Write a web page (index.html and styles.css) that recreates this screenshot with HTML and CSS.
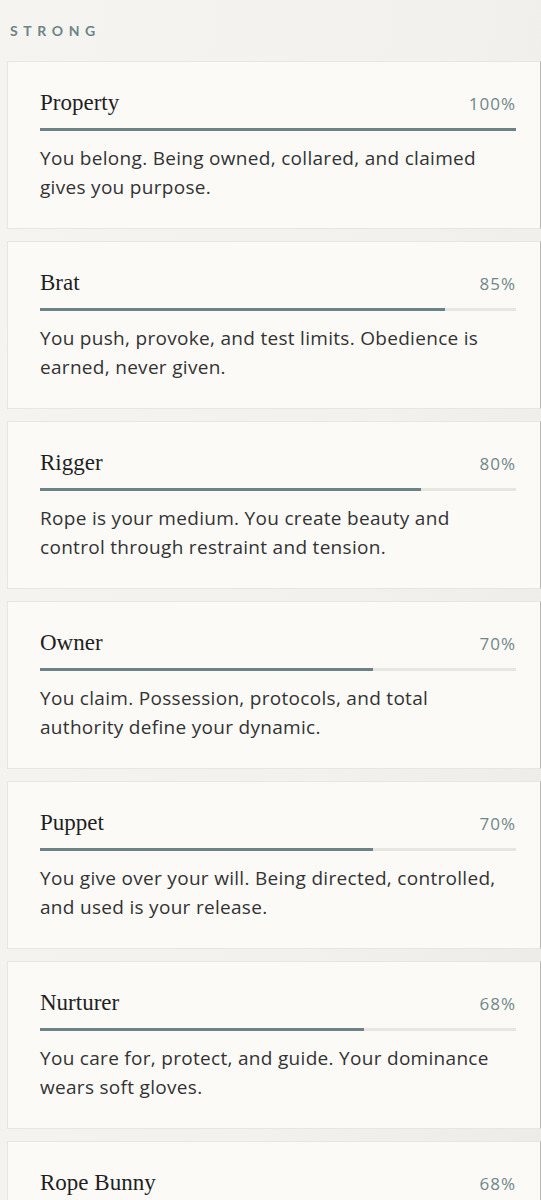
FILE: index.html
```html
<!DOCTYPE html>
<html lang="en">
<head>
	<meta charset="UTF-8" />
	<title>Results</title>
	<link rel="stylesheet" href="styles.css">
</head>
<body>
	<h2 class="tier">Strong</h2>

	<div class="results">
		<div class="card">
			<div class="head"><span class="name">Property</span><span class="pct">100%</span></div>
			<div class="track"><div class="fill" style="width: 100%"></div></div>
			<p>You belong. Being owned, collared, and claimed gives you purpose.</p>
		</div>
		<div class="card">
			<div class="head"><span class="name">Brat</span><span class="pct">85%</span></div>
			<div class="track"><div class="fill" style="width: 85%"></div></div>
			<p>You push, provoke, and test limits. Obedience is earned, never given.</p>
		</div>
		<div class="card">
			<div class="head"><span class="name">Rigger</span><span class="pct">80%</span></div>
			<div class="track"><div class="fill" style="width: 80%"></div></div>
			<p>Rope is your medium. You create beauty and control through restraint and tension.</p>
		</div>
		<div class="card">
			<div class="head"><span class="name">Owner</span><span class="pct">70%</span></div>
			<div class="track"><div class="fill" style="width: 70%"></div></div>
			<p>You claim. Possession, protocols, and total authority define your dynamic.</p>
		</div>
		<div class="card">
			<div class="head"><span class="name">Puppet</span><span class="pct">70%</span></div>
			<div class="track"><div class="fill" style="width: 70%"></div></div>
			<p>You give over your will. Being directed, controlled, and used is your release.</p>
		</div>
		<div class="card">
			<div class="head"><span class="name">Nurturer</span><span class="pct">68%</span></div>
			<div class="track"><div class="fill" style="width: 68%"></div></div>
			<p>You care for, protect, and guide. Your dominance wears soft gloves.</p>
		</div>
		<div class="card">
			<div class="head"><span class="name">Rope Bunny</span><span class="pct">68%</span></div>
			<div class="track"><div class="fill" style="width: 68%"></div></div>
			<p>You love being tied. The bite of rope and surrender to it sets you free.</p>
		</div>
	</div>
</body>
</html>
```

FILE: styles.css
```css
html, body {
	overflow: hidden;
}

body {
	margin: 0;
	font-family: "Open Sans", Lato, sans-serif;
	color: #2f2f2f;
	background: linear-gradient(100deg, #f6f4f1 0%, #f3f1ee 60%, #ecebe8 100%);
}

.tier {
	margin: 0;
	padding: 21px 0 20px 10px;
	font-family: Lato, sans-serif;
	font-size: 14px;
	line-height: 20px;
	font-weight: 700;
	letter-spacing: 5.6px;
	text-transform: uppercase;
	color: #6c8586;
}

.results {
	display: flex;
	flex-direction: column;
	gap: 12px;
	padding-left: 7px;
}

.card {
	height: 168px;
	box-sizing: border-box;
	padding: 27px 24px 0 32px;
	background: #fbfaf7;
	border: 1px solid #e9e6e1;
	border-right-color: #b9b7b3;
}

.head {
	display: flex;
	justify-content: space-between;
	align-items: baseline;
	height: 28px;
	line-height: 28px;
}

.name {
	font-family: "Liberation Serif", serif;
	font-size: 23px;
	color: #1f1f1f;
}

.pct {
	font-size: 17px;
	letter-spacing: 1px;
	color: #6f8788;
}

.track {
	margin-top: 11px;
	height: 3px;
	background: #e7e6e2;
}

.fill {
	height: 100%;
	background: #6b8385;
}

p {
	margin: 13px 0 0;
	font-size: 19px;
	letter-spacing: 0.3px;
	line-height: 29px;
	color: #333;
}
```
